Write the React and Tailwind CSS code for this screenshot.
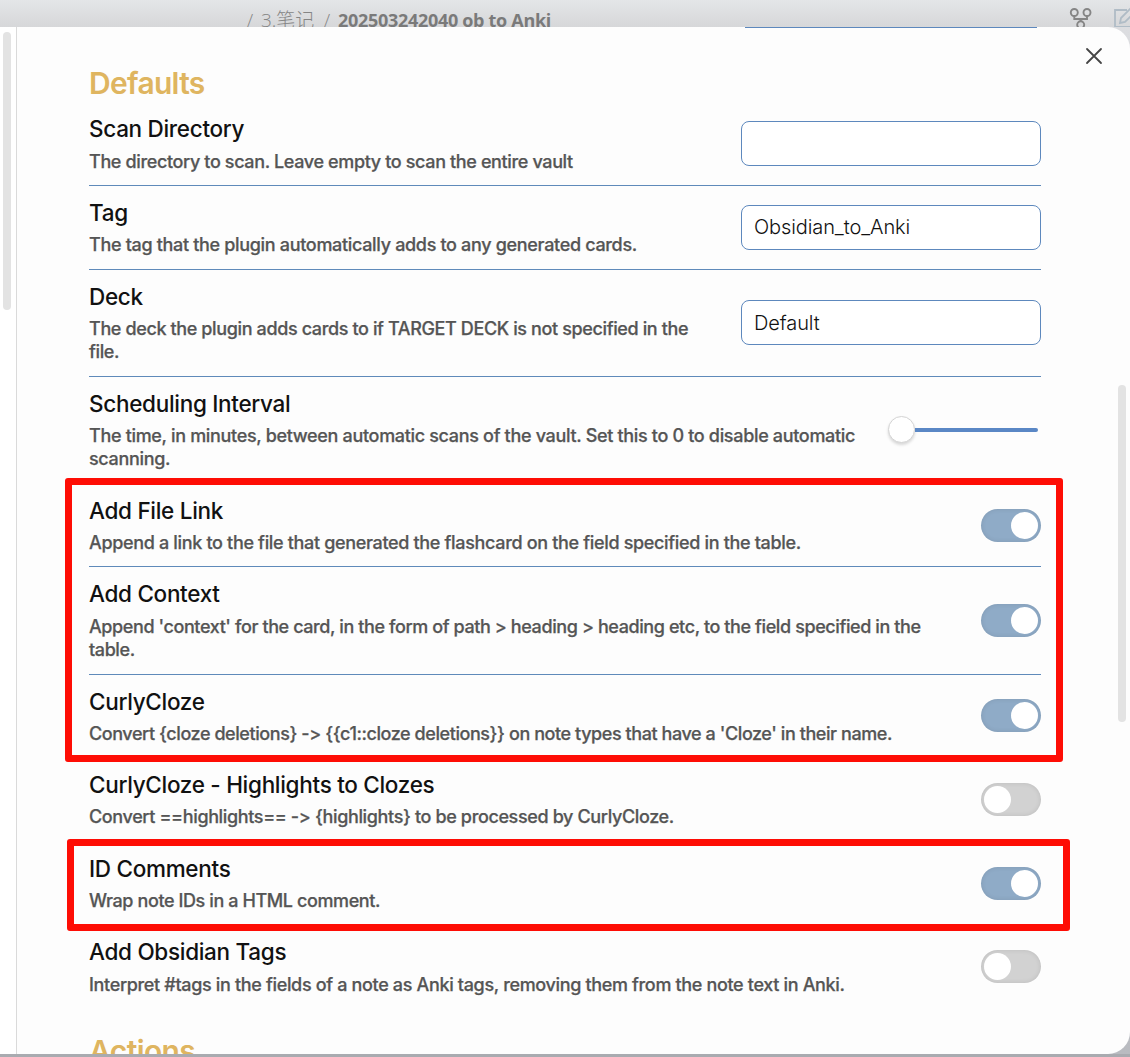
const ROWS = [
  { title: 'Scan Directory', lines: ['The directory to scan. Leave empty to scan the entire vault'], tracking: 'tracking-[-0.365px]', kind: 'input', value: '', size: 'h-[83px] border-t-0', text: 'gap-[7px]' },
  { title: 'Tag', lines: ['The tag that the plugin automatically adds to any generated cards.'], tracking: 'tracking-[-0.325px]', kind: 'input', value: 'Obsidian_to_Anki', inset: 'pb-[2px]', size: 'h-[84px] border-t', text: 'gap-[6px] pb-px' },
  { title: 'Deck', lines: ['The deck the plugin adds cards to if TARGET DECK is not specified in the', 'file.'], tracking: 'tracking-[-0.375px]', kind: 'input', value: 'Default', inset: 'pt-px', size: 'h-[107px] border-t', text: 'gap-[6px] pb-px', control: 'pb-[2px]' },
  { title: 'Scheduling Interval', lines: ['The time, in minutes, between automatic scans of the vault. Set this to 0 to disable automatic', 'scanning.'], tracking: 'tracking-[-0.327px]', kind: 'slider', size: 'h-[107px] border-t', text: 'gap-[6px] pb-px', control: 'pb-px' },
  { title: 'Add File Link', lines: ['Append a link to the file that generated the flashcard on the field specified in the table.'], tracking: 'tracking-[-0.333px]', kind: 'toggle', on: true, size: 'h-[83px] border-t', text: 'gap-[6px] pb-px' },
  { title: 'Add Context', lines: ["Append 'context' for the card, in the form of path > heading > heading etc, to the field specified in the", 'table.'], tracking: 'tracking-[-0.4px]', kind: 'toggle', on: true, size: 'h-[108px] border-t', text: 'gap-[7px] pb-[2px]' },
  { title: 'CurlyCloze', lines: ["Convert {cloze deletions} -> {{c1::cloze deletions}} on note types that have a 'Cloze' in their name."], tracking: 'tracking-[-0.425px]', kind: 'toggle', on: true, size: 'h-[83px] border-t', text: 'gap-[6px] pb-px', control: 'pb-[2px]' },
  { title: 'CurlyCloze - Highlights to Clozes', lines: ['Convert ==highlights== -> {highlights} to be processed by CurlyCloze.'], tracking: 'tracking-[-0.367px]', kind: 'toggle', on: false, size: 'h-[84px] border-t', text: 'gap-[6px] pb-px' },
  { title: 'ID Comments', lines: ['Wrap note IDs in a HTML comment.'], tracking: 'tracking-[-0.4px]', kind: 'toggle', on: true, size: 'h-[84px] border-t', text: 'gap-[6px] pb-px' },
  { title: 'Add Obsidian Tags', lines: ['Interpret #tags in the fields of a note as Anki tags, removing them from the note text in Anki.'], tracking: 'tracking-[-0.34px]', kind: 'toggle', on: false, size: 'h-[83px] border-t', text: 'gap-[7px] pb-[2px]', control: 'pb-[2px]' },
];

function Toggle({ on }) {
  return (
    <div
      className={
        'flex h-[33px] w-[60px] items-center rounded-full px-[3px] shadow-[inset_0_0_5px_rgba(0,0,0,0.1)] ' +
        (on ? 'justify-end bg-[#8fabc7]' : 'justify-start bg-[#d2d2d2]')
      }
    >
      <div className="size-[27px] rounded-full bg-white" />
    </div>
  );
}

function Slider() {
  return (
    <div className="flex w-[153px] items-center pr-[3px]">
      <div className="size-[27px] shrink-0 rounded-full border border-[#d4d4d4] bg-white shadow-[0_2px_3px_rgba(0,0,0,0.15)]" />
      <div className="h-1 flex-1 rounded-r-full bg-[#5a87c5]" />
    </div>
  );
}

function Control({ row }) {
  if (row.kind === 'input') {
    return (
      <div className={'flex h-[45px] w-[300px] items-center rounded-lg border border-[#5d88bd] bg-white px-3 text-[20px] font-light tracking-[-0.1px] text-[#111] ' + (row.inset || '')}>
        {row.value}
      </div>
    );
  }
  return row.kind === 'slider' ? <Slider /> : <Toggle on={row.on} />;
}

function Row({ row }) {
  return (
    <div className={'flex items-center justify-between border-[#5f8aba] ' + row.size}>
      <div className={'flex flex-col whitespace-nowrap ' + row.text}>
        <div className="text-[22.5px] leading-[29px] font-medium tracking-[-0.3px] text-[#111]">{row.title}</div>
        <div className={'text-[18px] leading-[23px] font-medium text-[#555] [-webkit-text-stroke:0.25px_#555] ' + row.tracking}>
          {row.lines.map((line) => (
            <div key={line}>{line}</div>
          ))}
        </div>
      </div>
      <div className={'shrink-0 ' + (row.control || '')}>
        <Control row={row} />
      </div>
    </div>
  );
}

export default function App() {
  return (
    <div className="relative flex h-[1057px] w-[1130px] flex-col overflow-hidden bg-[#a9abb0] font-['Inter',sans-serif]">
      <header className="relative h-[27px] shrink-0 overflow-hidden bg-linear-to-b from-[#e4e6e8] to-[#d6d7d9]">
        <div className="flex pt-[7px] pl-[247px] font-['Open_Sans','Noto_Sans_CJK_SC',sans-serif] text-[18px] leading-[27px] whitespace-pre text-[#858585]">
          <span className="w-[14px] font-light">/</span>
          <span className="w-[63px] text-[19px] font-light">3.笔记</span>
          <span className="w-[14px] font-light">/</span>
          <span className="font-bold tracking-[-0.3px] text-[#7a7a7a]">202503242040 ob to Anki</span>
        </div>
        <svg className="absolute top-[7px] left-[1069px]" width="24" height="24" viewBox="0 0 24 24" fill="none" stroke="#858585" strokeWidth="1.9">
          <circle cx="5.3" cy="5.5" r="3.5" />
          <circle cx="18" cy="5.5" r="3.5" />
          <circle cx="11.7" cy="17.8" r="3.5" />
          <path d="M5.3 9v3h12.7V9M11.7 12v2.5" />
        </svg>
        <svg className="absolute top-[7px] left-[1113px]" width="24" height="24" viewBox="0 0 24 24" fill="none" stroke="#b0bcc6" strokeWidth="1.8">
          <path d="M14 3H2v17h19v-8" />
          <path d="M7 16l1-5L18 1l4 4-10 10z" />
        </svg>
      </header>

      <main className="flex h-[1027px] shrink-0 overflow-hidden bg-linear-to-b from-[#dcdde0] to-[#b9bbc0]">
        <div className="flex h-full flex-1 overflow-hidden rounded-tr-[22px] rounded-br-[22px] bg-[#fdfdfd]">
          <aside className="w-[17px] shrink-0 border-r border-[#dadada] bg-white pt-[5px] pl-[3px]">
            <div className="h-[278px] w-2 rounded-full bg-[#e3e3e3]" />
          </aside>
          <section className="w-[1024px] shrink-0 pl-[72px]">
            <div className="mr-1 ml-auto h-px w-[292px] bg-[#5d88bd]" />
            <h2 className="mt-[37px] h-[37px] text-[30px] leading-[37px] font-semibold tracking-[-0.7px] text-[#dfb560]">Defaults</h2>
            {ROWS.map((row) => (
              <Row key={row.title} row={row} />
            ))}
            <h2 className="mt-[25px] h-[37px] text-[30px] leading-[37px] font-semibold tracking-[-0.6px] text-[#dfb560]">Actions</h2>
          </section>
          <div className="flex flex-1 flex-col items-end">
            <svg className="mt-[20px] mr-[27px]" width="18" height="18" viewBox="0 0 18 18" fill="none" stroke="#444" strokeWidth="1.8" strokeLinecap="round">
              <path d="M2 2l14 14M16 2L2 16" />
            </svg>
            <div className="mt-[320px] mr-1 h-[337px] w-2 rounded-full bg-[#e3e3e3]" />
          </div>
        </div>
      </main>

      <div className="absolute top-[478px] left-[65px] h-[284px] w-[998px] rounded-[3px] border-7 border-[#fe0d05]" />
      <div className="absolute top-[839px] left-[67px] h-[92px] w-[1003px] rounded-[3px] border-7 border-[#fe0d05]" />
    </div>
  );
}
